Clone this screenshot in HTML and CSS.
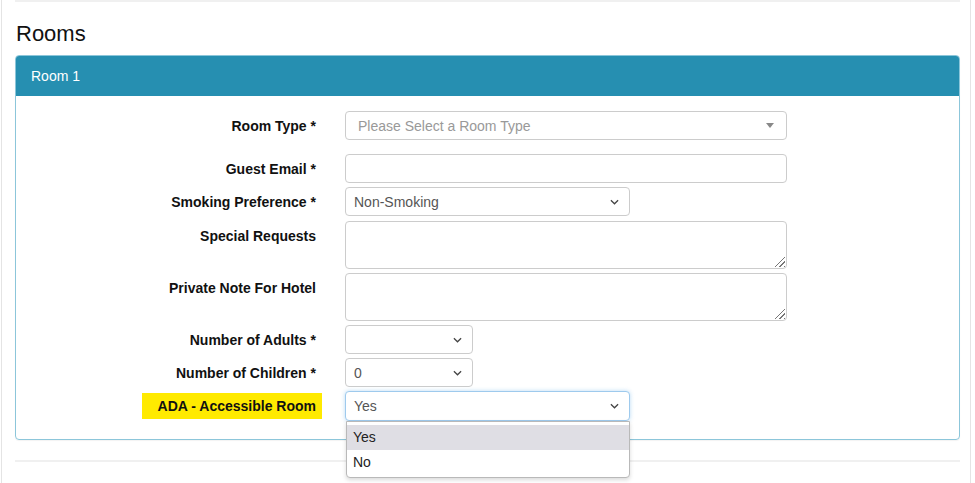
FILE: index.html
```html
<!DOCTYPE html>
<html lang="en">
<head>
  <meta charset="UTF-8" />
  <title>Reservation - Rooms</title>
  <link rel="stylesheet" href="styles.css">
</head>
<body>
  <div class="page">
    <hr class="divider top">

    <h2 class="section-title">Rooms</h2>

    <div class="panel">
      <div class="panel-heading">Room 1</div>
      <div class="panel-body">

        <div class="form-row first">
          <label class="form-label">Room Type *</label>
          <div class="form-control wide select2">
            <span class="placeholder">Please Select a Room Type</span>
            <span class="caret"></span>
          </div>
        </div>

        <div class="form-row spaced">
          <label class="form-label">Guest Email *</label>
          <div class="form-control wide"></div>
        </div>

        <div class="form-row">
          <label class="form-label">Smoking Preference *</label>
          <div class="form-control medium select">
            <span>Non-Smoking</span>
            <svg class="chev" viewBox="0 0 10 6"><path d="M1 1l4 4 4-4" /></svg>
          </div>
        </div>

        <div class="form-row top after-select">
          <label class="form-label">Special Requests</label>
          <div class="form-control wide textarea"><span class="grip"></span></div>
        </div>

        <div class="form-row top">
          <label class="form-label">Private Note For Hotel</label>
          <div class="form-control wide textarea"><span class="grip"></span></div>
        </div>

        <div class="form-row">
          <label class="form-label">Number of Adults *</label>
          <div class="form-control small select">
            <span></span>
            <svg class="chev" viewBox="0 0 10 6"><path d="M1 1l4 4 4-4" /></svg>
          </div>
        </div>

        <div class="form-row">
          <label class="form-label">Number of Children *</label>
          <div class="form-control small select">
            <span>0</span>
            <svg class="chev" viewBox="0 0 10 6"><path d="M1 1l4 4 4-4" /></svg>
          </div>
        </div>

        <div class="form-row">
          <label class="form-label"><span class="highlight">ADA - Accessible Room</span></label>
          <div class="select-wrap">
            <div class="form-control medium select focused">
              <span>Yes</span>
              <svg class="chev" viewBox="0 0 10 6"><path d="M1 1l4 4 4-4" /></svg>
            </div>
            <!-- lista aberta do select -->
            <ul class="dropdown">
              <li class="active">Yes</li>
              <li>No</li>
            </ul>
          </div>
        </div>

      </div>
    </div>

    <hr class="divider bottom">
  </div>
</body>
</html>
```

FILE: styles.css
```css
/* ================================
   Geral
   ================================ */
* {
  margin: 0;
  padding: 0;
  box-sizing: border-box;
}
body {
  font-family: "Liberation Sans", Arial, sans-serif;
  font-size: 14px;
  color: #111;
  background: #fff;
  overflow: hidden;
}

.page {
  margin-left: 1px;
  width: 970px;
  height: 483px;
  padding: 0 10px 0 13px;
  border-left: 1px solid #e4e4e4;
  border-right: 1px solid #e4e4e4;
}

.divider {
  border: 0;
  border-top: 2px solid #f0f0f0;
}
.divider.bottom {
  margin-top: 20px;
}

.section-title {
  font-size: 22px;
  font-weight: normal;
  color: #111;
  margin: 19px 0 8px 1px;
  line-height: 26px;
}

/* ================================
   Painel
   ================================ */
.panel {
  border: 1px solid #8cc6da;
  border-radius: 4px;
  box-shadow: 0 1px 1px rgba(0, 0, 0, 0.05);
}
.panel-heading {
  background: #268fb1;
  color: #fff;
  padding: 0 15px;
  height: 40px;
  line-height: 40px;
  border-radius: 3px 3px 0 0;
}
.panel-body {
  padding: 15px 0 18px;
}

/* ================================
   Linhas do formulário
   ================================ */
.form-row {
  display: flex;
  align-items: center;
  margin-top: 4px;
}
.form-row.first {
  margin-top: 0;
}
.form-row.spaced {
  margin-top: 14px;
}
.form-row.after-select {
  margin-top: 5px;
}
.form-row.top {
  align-items: flex-start;
}
.form-row.top .form-label {
  padding-top: 7px;
}

.form-label {
  width: 306px;
  padding-right: 6px;
  text-align: right;
  font-weight: bold;
  color: #111;
  margin-right: 23px;
}
.highlight {
  display: inline-block;
  background: #ffea00;
  padding: 5px 6px 5px 16px;
  margin-right: -6px;
}

.form-control {
  height: 29px;
  border: 1px solid #ccc;
  border-radius: 4px;
  background: #fff;
  color: #555;
  display: flex;
  align-items: center;
  justify-content: space-between;
  padding: 0 10px 0 8px;
}
.form-control.wide {
  width: 442px;
}
.form-control.medium {
  width: 285px;
}
.form-control.small {
  width: 128px;
}
.form-control.focused {
  height: 30px;
  border-color: #9ecaed;
  box-shadow: 0 0 4px rgba(102, 175, 233, 0.45);
}

.select2 {
  padding-left: 12px;
  padding-right: 12px;
}
.placeholder {
  color: #999;
}
.caret {
  width: 0;
  height: 0;
  border-left: 4px solid transparent;
  border-right: 4px solid transparent;
  border-top: 5px solid #888;
}

.chev {
  width: 9px;
  height: 6px;
  fill: none;
  stroke: #444;
  stroke-width: 1.4;
}

.textarea {
  height: 48px;
  position: relative;
}
/* alça de redimensionar */
.grip {
  position: absolute;
  right: 1px;
  bottom: 1px;
  width: 13px;
  height: 13px;
  background: repeating-linear-gradient(135deg, transparent 0 2px, #777 2px 3px);
  clip-path: polygon(100% 0, 100% 100%, 0 100%);
}

/* ================================
   Lista aberta (select)
   ================================ */
.select-wrap {
  position: relative;
}
.dropdown {
  position: absolute;
  top: 30px;
  left: 1px;
  width: 284px;
  list-style: none;
  background: #fff;
  border: 1px solid #b9b9b9;
  border-radius: 0 0 4px 4px;
  box-shadow: 0 2px 4px rgba(0, 0, 0, 0.15);
  padding: 3px 0 2px;
  z-index: 10;
}
.dropdown li {
  height: 25px;
  line-height: 25px;
  padding-left: 6px;
  color: #222;
}
.dropdown li.active {
  background: #dfdee4;
}
```
